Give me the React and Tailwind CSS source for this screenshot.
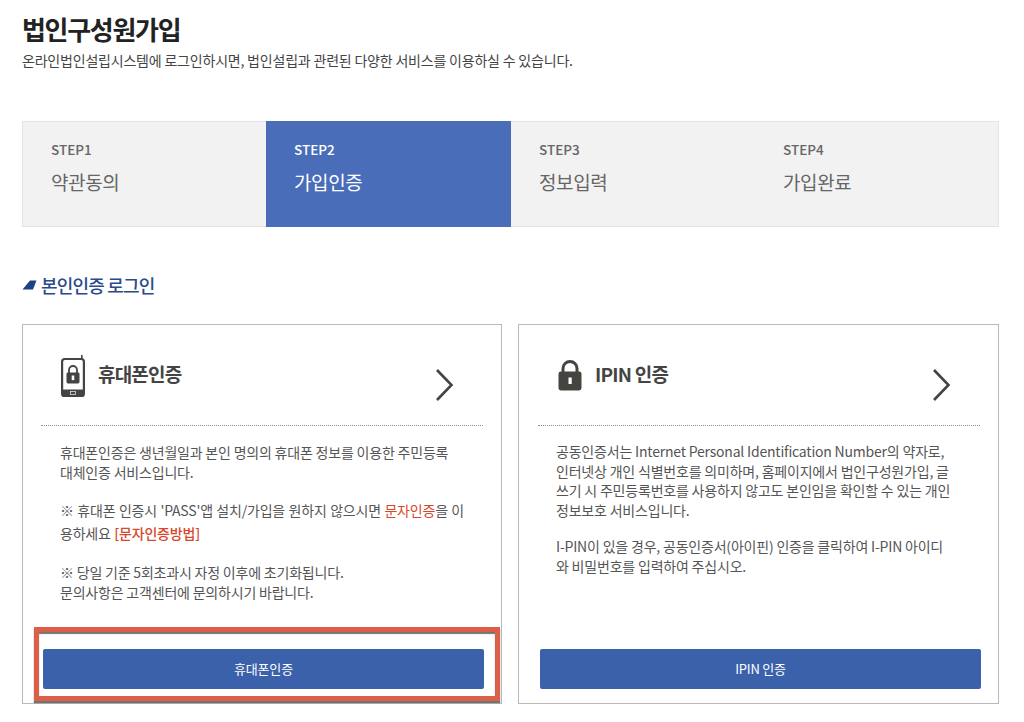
const FONT = "font-['Noto_Sans_CJK_KR','Noto_Sans',sans-serif]";

const steps = [
  { no: "STEP1", name: "약관동의" },
  { no: "STEP2", name: "가입인증", active: true },
  { no: "STEP3", name: "정보입력" },
  { no: "STEP4", name: "가입완료" },
];

function Chevron() {
  return (
    <svg width="20" height="34" viewBox="0 0 20 34" fill="none" className="shrink-0">
      <path d="M2 2 L16.5 17 L2 32" stroke="#444" strokeWidth="2.6" />
    </svg>
  );
}

function PhoneIcon() {
  return (
    <svg width="24" height="42" viewBox="0 0 24 42">
      <rect x="20" y="0" width="1.6" height="4" fill="#444" />
      <rect x="1.1" y="4" width="21.8" height="37" rx="2.6" fill="none" stroke="#444" strokeWidth="2.2" />
      <rect x="1" y="34.5" width="22" height="7" rx="1.5" fill="#444" />
      <rect x="9.5" y="36.5" width="5" height="3" fill="none" stroke="#ddd" strokeWidth="0.8" />
      <path d="M8 18 v-3 a4 4 0 0 1 8 0 v3" fill="none" stroke="#444" strokeWidth="1.8" />
      <rect x="5.5" y="17.5" width="13" height="11" rx="1.4" fill="#444" />
      <rect x="10.7" y="20.5" width="2.6" height="4.6" fill="#fff" />
    </svg>
  );
}

function LockIcon() {
  return (
    <svg width="24" height="32" viewBox="0 0 24 32">
      <path d="M5 14 V9.5 a7 7 0 0 1 14 0 V14" fill="none" stroke="#444440" strokeWidth="3" />
      <rect x="0.5" y="12.5" width="23" height="19" rx="2.4" fill="#444440" />
      <rect x="10.5" y="18.5" width="3.2" height="6.5" fill="#fff" />
    </svg>
  );
}

function Card({ icon, title, button, box, bodyPad, iconTop, children }) {
  return (
    <div className={`${box} h-[380px] border border-[#b9b9b9] flex flex-col pr-[18px]`}>
      <div className="h-[101px] flex items-start justify-between border-b border-dotted border-[#8f8f8f]">
        <div className="flex items-start gap-[13px] pt-[30px] pl-[20px]">
          <div className={`w-[24px] flex justify-center ${iconTop}`}>{icon}</div>
          <h3 className="text-[19px] leading-[38px] font-bold text-[#444] tracking-[-0.8px]">{title}</h3>
        </div>
        <div className="pt-[43px] pr-[28px]">
          <Chevron />
        </div>
      </div>
      <div className={`flex-1 pt-[16px] ${bodyPad} pr-[8px] text-[14px] leading-[20px] text-[#555] tracking-[-0.2px]`}>
        {children}
      </div>
      <button className="h-[40px] mb-[14px] ml-[2px] mr-[-1px] bg-[#3a61aa] rounded-[2px] text-white text-[13px] tracking-[-0.2px]">
        {button}
      </button>
    </div>
  );
}

export default function App() {
  return (
    <div className={`${FONT} relative w-[1024px] h-[722px] overflow-hidden bg-white pl-[22px] pr-[25px] pt-[11px]`}>
      <h1 className="text-[26px] leading-[36px] font-bold text-[#222] tracking-[-1.3px]">법인구성원가입</h1>
      <p className="mt-[1px] text-[14px] leading-[24px] text-[#444] tracking-[-0.2px]">
        온라인법인설립시스템에 로그인하시면, 법인설립과 관련된 다양한 서비스를 이용하실 수 있습니다.
      </p>

      <div className="mt-[49px] h-[106px] grid grid-cols-[243px_245px_244px_1fr] bg-[#f2f2f2] border border-[#e4e4e4]">
        {steps.map((s) => (
          <div
            key={s.no}
            className={`pl-[28px] pt-[15px] -my-px ${s.active ? "bg-[#4a6dba] text-white" : "text-[#666]"}`}
          >
            <div className="text-[13.5px] leading-[26px] font-medium">{s.no}</div>
            <div className="mt-[6px] text-[19px] leading-[28px] tracking-[-0.4px]">{s.name}</div>
          </div>
        ))}
      </div>

      <div className="mt-[44px] flex items-center gap-[4px] h-[28px]">
        <svg width="15" height="10" viewBox="0 0 15 10" className="shrink-0">
          <path d="M0.5 9.5 L8 0.5 H14.5 L11 9.5 Z" fill="#1f3f87" />
        </svg>
        <h2 className="text-[18px] leading-[28px] font-medium text-[#2b4a8c] tracking-[-0.8px]">본인인증 로그인</h2>
      </div>

      <div className="mt-[25px] flex justify-between">
        <Card
          icon={<PhoneIcon />}
          title="휴대폰인증"
          button="휴대폰인증"
          box="w-[480px] pl-[18px]"
          bodyPad="pl-[19px]"
          iconTop=""
        >
          <p>
            휴대폰인증은 생년월일과 본인 명의의 휴대폰 정보를 이용한 주민등록
            <br />
            대체인증 서비스입니다.
          </p>
          <p className="mt-[17px] leading-[23px] [word-spacing:0.6px]">
            ※ 휴대폰 인증시 'PASS'앱 설치/가입을 원하지 않으시면 <span className="text-[#d9472b]">문자인증</span>을 이
            <br />
            용하세요 <span className="text-[#d9472b] font-medium">[문자인증방법]</span>
          </p>
          <p className="mt-[17px]">
            ※ 당일 기준 5회초과시 자정 이후에 초기화됩니다.
            <br />
            문의사항은 고객센터에 문의하시기 바랍니다.
          </p>
        </Card>
        <Card
          icon={<LockIcon />}
          title="IPIN 인증"
          button="IPIN 인증"
          box="w-[481px] pl-[19px]"
          bodyPad="pl-[18px]"
          iconTop="pt-[4px]"
        >
          <p className="leading-[19.5px]">
            공동인증서는 Internet Personal Identification Number의 약자로,
            <br />
            인터넷상 개인 식별번호를 의미하며, 홈페이지에서 법인구성원가입, 글
            <br />
            쓰기 시 주민등록번호를 사용하지 않고도 본인임을 확인할 수 있는 개인
            <br />
            정보보호 서비스입니다.
          </p>
          <p className="mt-[17px] leading-[19.5px]">
            I-PIN이 있을 경우, 공동인증서(아이핀) 인증을 클릭하여 I-PIN 아이디
            <br />
            와 비밀번호를 입력하여 주십시오.
          </p>
        </Card>
      </div>

      {/* annotation box over the first button */}
      <div className="absolute left-[34px] top-[627px] w-[466px] h-[74px] border-[5px] border-[#dc5f47] shadow-[0_2px_1px_rgba(0,0,0,0.55),inset_0_2px_1px_rgba(0,0,0,0.55)]" />
    </div>
  );
}
